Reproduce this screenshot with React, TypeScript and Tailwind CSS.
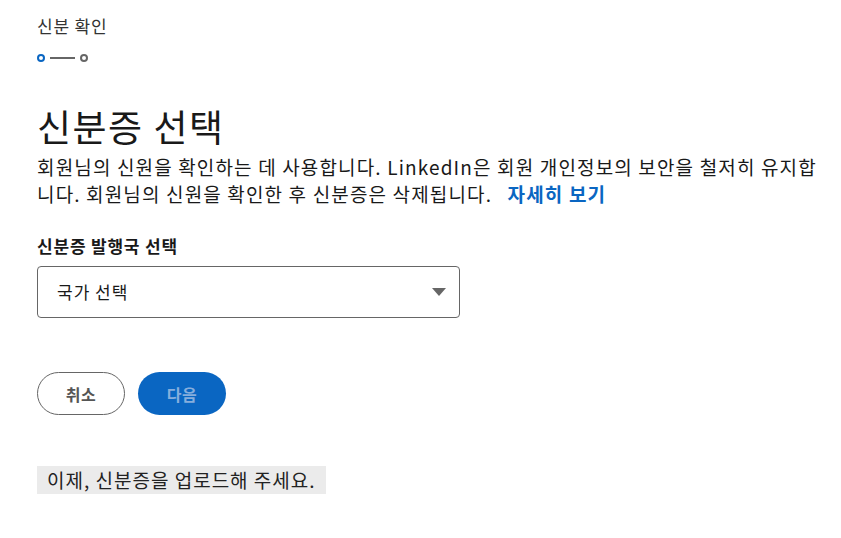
import React from 'react';

const font = { fontFamily: '"Noto Sans CJK KR", "Noto Sans", sans-serif' };

export default function App() {
    return (
        <div className="min-h-screen bg-white text-[#191919] px-[37px] pt-[14px]" style={font}>
            {/* Step header */}
            <div className="text-[17px] leading-[24px] tracking-[0.8px] text-[#333]">신분 확인</div>
            <div className="flex items-center mt-[16px] h-[8px]">
                <span className="w-[8px] h-[8px] rounded-full border-2 border-[#0a66c2]" />
                <span className="w-[25px] h-[2px] bg-[#666] mx-[5px]" />
                <span className="w-[8px] h-[8px] rounded-full border-2 border-[#666]" />
            </div>

            {/* Title */}
            <h1 className="mt-[42px] text-[37px] leading-[44px] font-normal tracking-[1.5px]">신분증 선택</h1>
            <p className="mt-[5px] w-[800px] text-[19px] leading-[27px] tracking-[1.15px]">
                회원님의 신원을 확인하는 데 사용합니다. LinkedIn은 회원 개인정보의 보안을 철저히 유지합<br />니다. 회원님의 신원을 확인한 후 신분증은 삭제됩니다.{' '}
                <a className="ml-[10px] text-[#0a66c2] font-bold">자세히 보기</a>
            </p>

            {/* Country select */}
            <div className="mt-[28px] text-[17px] leading-[22px] tracking-[0.8px] font-bold">신분증 발행국 선택</div>
            <div className="mt-[9px] w-[423px] h-[52px] border border-[#666] rounded-[4px] flex items-center justify-between pl-[19px] pr-[13px]">
                <span className="text-[17px] tracking-[1px]">국가 선택</span>
                <svg width="14" height="8" viewBox="0 0 14 8">
                    <path d="M0 0h14L7 8z" fill="#666" />
                </svg>
            </div>

            {/* Actions */}
            <div className="mt-[54px] flex gap-[13px]">
                <button className="w-[88px] h-[43px] rounded-full border border-[#666] text-[16px] font-bold text-[#555] tracking-[0.5px]">
                    취소
                </button>
                <button className="w-[88px] h-[43px] rounded-full bg-[#0a66c2] text-[16px] font-bold text-[#86aedd] tracking-[0.5px]">
                    다음
                </button>
            </div>

            {/* Notice */}
            <div className="mt-[51px] inline-block bg-[#ebebeb] px-[10px] text-[19px] leading-[28px] tracking-[1px] text-[#222]">
                이제, 신분증을 업로드해 주세요.
            </div>
        </div>
    );
}
